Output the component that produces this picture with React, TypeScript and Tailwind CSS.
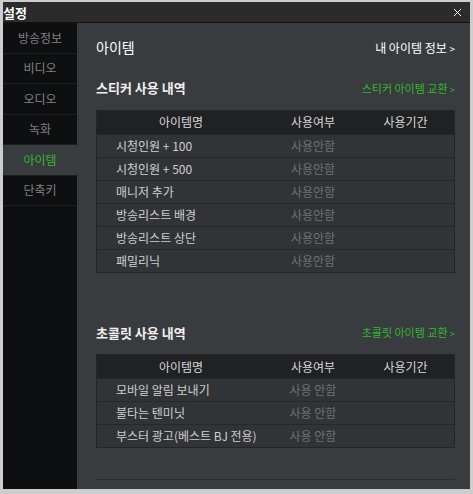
import { X } from 'lucide-react'

const stickers = ['시청인원 + 100', '시청인원 + 500', '매니저 추가', '방송리스트 배경', '방송리스트 상단', '패밀리닉']
const chocos = ['모바일 알림 보내기', '불타는 텐미닛', '부스터 광고(베스트 BJ 전용)']
const menu = ['방송정보', '비디오', '오디오', '녹화', '아이템', '단축키']

function Table({ rows, status }: { rows: string[]; status: string }) {
  return (
    <div className="border border-[#232527]">
      <div className="flex h-[23px] items-center bg-[#1f2123] text-[12px] text-[#d8d8d8]">
        <div className="w-[168px] text-center">아이템명</div>
        <div className="w-[96px] text-center">사용여부</div>
        <div className="flex-1 text-center pr-[4px]">사용기간</div>
      </div>
      {rows.map((r) => (
        <div key={r} className="flex h-[23px] items-center border-t border-[#26292b] bg-[#313436] text-[12px]">
          <div className="w-[168px] pl-[19px] text-[#cfcfcf]">{r}</div>
          <div className="w-[96px] text-center text-[#6f7173]">{status}</div>
          <div className="flex-1" />
        </div>
      ))}
    </div>
  )
}

export default function App() {
  return (
    <div
      className="w-[473px] h-[494px] bg-[#cdcdcd] pt-[2px] pl-[3px] pr-[3px] pb-[5px]"
      style={{ fontFamily: '"Noto Sans CJK KR", "Noto Sans", sans-serif' }}
    >
      <div className="flex h-full flex-col">
        <div className="flex h-[21px] items-center justify-between bg-[#2b2b2b] border-b border-[#121212] pr-[6px]">
          <span className="text-[13px] font-bold leading-none text-white">설정</span>
          <X size={13} strokeWidth={1.8} className="text-white" />
        </div>
        <div className="flex flex-1 min-h-0">
          <div className="w-[74px] bg-[#0e0f10]">
            {menu.map((m) => (
              <div
                key={m}
                className={
                  m === '아이템'
                    ? 'flex h-[30.5px] items-center justify-center border-b border-[#1c1d1f] bg-[#393c3e] text-[12px] text-[#2fb82f]'
                    : 'flex h-[30.5px] items-center justify-center border-b border-[#1c1d1f] text-[12px] text-[#808080]'
                }
              >
                {m}
              </div>
            ))}
          </div>
          <div className="flex-1 bg-[#393c3e] pl-[19px] pr-[15px] pt-[14px]">
            <div className="flex items-center justify-between">
              <span className="text-[14px] text-white">아이템</span>
              <span className="text-[12px] text-white">내 아이템 정보 <span className="text-[10px]">&gt;</span></span>
            </div>
            <div className="mt-[20px] mb-[12px] flex items-center justify-between">
              <span className="text-[13px] font-bold text-[#f0f0f0]">스티커 사용 내역</span>
              <span className="text-[11px] text-[#2fb82f]">스티커 아이템 교환 <span className="text-[9px]">&gt;</span></span>
            </div>
            <Table rows={stickers} status="사용안함" />
            <div className="mt-[50px] mb-[12px] flex items-center justify-between">
              <span className="text-[13px] font-bold text-[#f0f0f0]">초콜릿 사용 내역</span>
              <span className="text-[11px] text-[#2fb82f]">초콜릿 아이템 교환 <span className="text-[9px]">&gt;</span></span>
            </div>
            <Table rows={chocos} status="사용 안함" />
            <div className="mt-[31px] border-t border-[#2a2c2e]" />
          </div>
        </div>
      </div>
    </div>
  )
}
